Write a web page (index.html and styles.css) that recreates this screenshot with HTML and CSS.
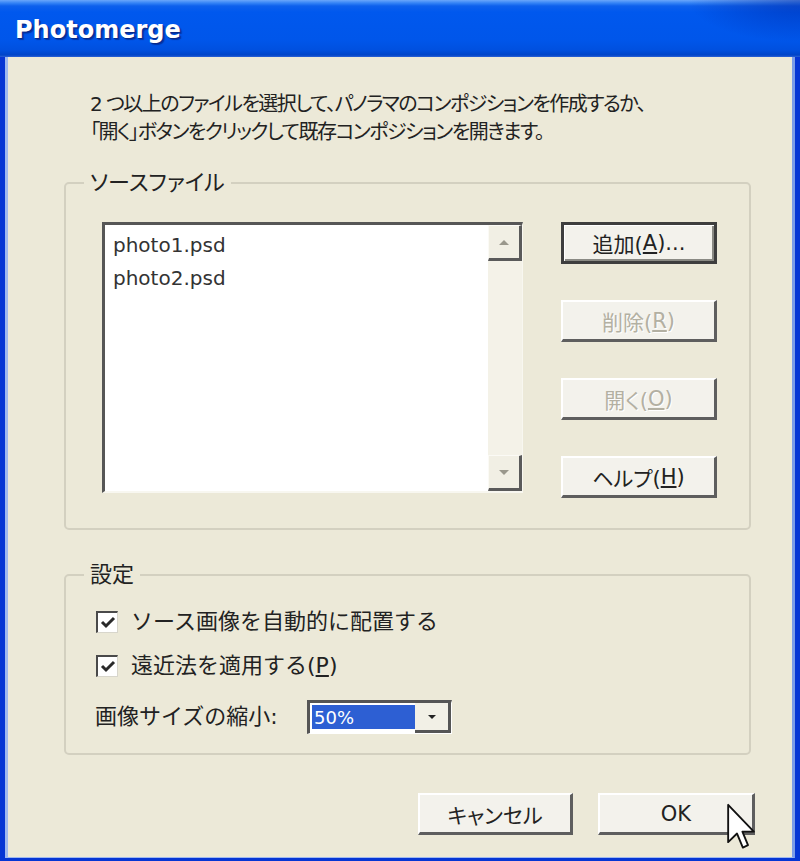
FILE: index.html
```html
<!DOCTYPE html>
<html lang="ja">
<head>
<meta charset="utf-8">
<title>Photomerge</title>
<link rel="stylesheet" href="styles.css">
</head>
<body>
<div class="window">
  <div class="titlebar"><span class="title">Photomerge</span></div>
  <div class="frame">
    <div class="client">
      <p class="desc">2 つ以上のファイルを選択して、パノラマのコンポジションを作成するか、<br>「開く」ボタンをクリックして既存コンポジションを開きます。</p>

      <fieldset class="group source">
        <legend class="legend">ソースファイル</legend>
        <div class="source-body">
          <div class="listbox">
            <div class="items">
              <div class="item">photo1.psd</div>
              <div class="item">photo2.psd</div>
            </div>
            <div class="scrollbar">
              <div class="sb-btn"><svg width="12" height="7" viewBox="0 0 12 7"><path d="M1 6 L6 1 L11 6 Z" fill="#9a988c"/></svg></div>
              <div class="sb-track"></div>
              <div class="sb-btn"><svg width="12" height="7" viewBox="0 0 12 7"><path d="M1 1 L11 1 L6 6 Z" fill="#9a988c"/></svg></div>
            </div>
          </div>
          <div class="btn-col">
            <button class="btn default">追加(<u>A</u>)...</button>
            <button class="btn" disabled>削除(<u>R</u>)</button>
            <button class="btn" disabled>開く(<u>O</u>)</button>
            <button class="btn">ヘルプ(<u>H</u>)</button>
          </div>
        </div>
      </fieldset>

      <fieldset class="group settings">
        <legend class="legend">設定</legend>
        <div class="settings-body">
          <label class="check-row">
            <span class="checkbox"><svg width="16" height="14" viewBox="0 0 16 14"><path d="M2 6 L6 10 L14 2" fill="none" stroke="#2a2a2a" stroke-width="3"/></svg></span>
            <span class="check-label">ソース画像を自動的に配置する</span>
          </label>
          <label class="check-row second">
            <span class="checkbox"><svg width="16" height="14" viewBox="0 0 16 14"><path d="M2 6 L6 10 L14 2" fill="none" stroke="#2a2a2a" stroke-width="3"/></svg></span>
            <span class="check-label">遠近法を適用する(<u>P</u>)</span>
          </label>
          <div class="combo-row">
            <span class="combo-label">画像サイズの縮小:</span>
            <div class="combo">
              <span class="combo-value">50%</span>
              <span class="combo-btn"><svg width="10" height="6" viewBox="0 0 10 6"><path d="M1 1 L9 1 L5 5 Z" fill="#222"/></svg></span>
            </div>
          </div>
        </div>
      </fieldset>

      <div class="footer">
        <button class="btn cancel">キャンセル</button>
        <button class="btn ok">OK</button>
      </div>
    </div>
  </div>
  <svg class="cursor" width="28" height="48" viewBox="0 0 12 20"><path d="M0.5 0.5 L0.5 16.5 L4.3 12.8 L6.8 18.8 L9 17.8 L6.6 12 L11.5 12 Z" fill="#fff" stroke="#111" stroke-width="0.8" stroke-linejoin="round"/></svg>
</div>
</body>
</html>
```

FILE: styles.css
```css
* { box-sizing: border-box; }

html, body {
  margin: 0;
  padding: 0;
}

body {
  width: 800px;
  height: 861px;
  overflow: hidden;
  font-family: "DejaVu Sans", "Noto Sans CJK JP", sans-serif;
  color: #222;
  background: #0b3fd6;
}

.window {
  position: relative;
  width: 800px;
  height: 861px;
  display: flex;
  flex-direction: column;
}

.titlebar {
  height: 57px;
  flex: none;
  display: flex;
  align-items: center;
  padding-left: 15px;
  background:
    radial-gradient(ellipse 160px 60px at 100% 0%, rgba(0, 30, 150, 0.45), rgba(0, 30, 150, 0) 70%),
    linear-gradient(to bottom, #6aa6fa 0px, #3584f6 3px, #0d60ec 6px, #0058ee 12px, #0056ea 40px, #0050df 50px, #0044c8 55px, #2b62d6 57px);
}

.title {
  font-family: "DejaVu Sans", sans-serif;
  font-weight: bold;
  font-size: 24px;
  color: #fff;
  text-shadow: 1px 1px 0 #0a2a8a, 2px 2px 1px rgba(0, 20, 100, 0.5);
  margin-top: 2px;
}

.frame {
  flex: 1;
  display: flex;
  padding: 0 5px 3px 5px;
  background: #0636d4;
}

.client {
  flex: 1;
  display: flex;
  flex-direction: column;
  background: #ece9d8;
  border-left: 3px solid #9fb9ef;
  border-right: 3px solid #7c9de8;
  border-bottom: 1px solid #9fb9ef;
  padding: 33px 41px 0 56px;
}

.desc {
  margin: 0 0 0 26px;
  font-size: 20px;
  line-height: 28px;
  white-space: nowrap;
  font-feature-settings: "palt";
  letter-spacing: -1.5px;
  color: #222;
}

.group {
  margin: 0;
  padding: 0;
  border: 2px solid #d3d0c0;
  border-radius: 5px;
  min-width: 0;
}

.legend {
  margin-left: 18px;
  padding: 0 6px;
  font-size: 22px;
  line-height: 28px;
  font-feature-settings: "palt";
  color: #222;
}

.source {
  margin-top: 23px;
}

.source-body {
  display: flex;
  align-items: flex-start;
  gap: 38px;
  padding: 25px 32px 30px 36px;
}

.listbox {
  width: 421px;
  height: 271px;
  display: flex;
  background: #fff;
  border-top: 3px solid #565656;
  border-left: 3px solid #565656;
  border-right: 1px solid #f8f7f0;
  border-bottom: 2px solid #f8f7f0;
}

.items {
  flex: 1;
  padding: 4px 8px;
}

.item {
  font-family: "DejaVu Sans", sans-serif;
  font-size: 20px;
  line-height: 33px;
  color: #333;
}

.scrollbar {
  width: 34px;
  display: flex;
  flex-direction: column;
  background: #f4f2e8;
}

.sb-btn {
  height: 36px;
  display: flex;
  align-items: center;
  justify-content: center;
  background: #f1efe4;
  border-right: 3px solid #5a5a5a;
  border-bottom: 3px solid #5a5a5a;
  border-top: 1px solid #fbfaf5;
  border-left: 1px solid #fbfaf5;
}

.sb-track {
  flex: 1;
}

.btn-col {
  display: flex;
  flex-direction: column;
  gap: 36px;
  width: 156px;
}

.btn {
  height: 42px;
  padding: 0;
  display: flex;
  align-items: center;
  justify-content: center;
  background: #f3f2ec;
  border-top: 2px solid #ffffff;
  border-left: 2px solid #ffffff;
  border-right: 3px solid #5e5e5e;
  border-bottom: 3px solid #5e5e5e;
  font-family: "DejaVu Sans", "Noto Sans CJK JP", sans-serif;
  font-size: 21px;
  font-feature-settings: "palt";
  color: #222;
}

.btn.default {
  border: 3px solid #3e3e3e;
  box-shadow: inset 1px 1px 0 #ffffff, inset -2px -2px 0 #8a8a84;
}

.btn:disabled {
  color: #b3b0a2;
  text-shadow: 1px 1px 0 #ffffff;
}

.settings {
  margin-top: 31px;
}

.settings-body {
  display: flex;
  flex-direction: column;
  padding: 19px 30px 19px 30px;
}

.check-row {
  display: flex;
  align-items: center;
  height: 28px;
  gap: 13px;
}

.check-row.second {
  margin-top: 16px;
}

.checkbox {
  width: 22px;
  height: 22px;
  flex: none;
  display: flex;
  align-items: center;
  justify-content: center;
  background: #fff;
  border-top: 2px solid #4a4a4a;
  border-left: 2px solid #4a4a4a;
  border-right: 1px solid #d8d6cc;
  border-bottom: 1px solid #d8d6cc;
}

.check-label,
.combo-label {
  font-size: 22px;
  line-height: 28px;
  white-space: nowrap;
  color: #222;
}

.combo-row {
  display: flex;
  align-items: center;
  height: 34px;
  margin-top: 20px;
}

.combo-label {
  width: 212px;
  margin-left: -1px;
}

.combo {
  width: 145px;
  height: 34px;
  display: flex;
  background: #fff;
  border-top: 3px solid #555;
  border-left: 3px solid #555;
  border-right: 1px solid #fff;
  border-bottom: 1px solid #fff;
}

.combo-value {
  flex: 1;
  margin: 2px 0 4px 2px;
  padding-left: 2px;
  display: flex;
  align-items: center;
  background: #2d5fd3;
  color: #fff;
  font-family: "DejaVu Sans", sans-serif;
  font-size: 18px;
}

.combo-btn {
  width: 36px;
  display: flex;
  align-items: center;
  justify-content: center;
  background: #f2f0e6;
  border-right: 3px solid #555;
  border-bottom: 3px solid #555;
}

.footer {
  display: flex;
  justify-content: flex-end;
  gap: 25px;
  margin-top: 38px;
  margin-right: -4px;
}

.btn.cancel {
  width: 155px;
}

.btn.ok {
  width: 157px;
}

.cursor {
  position: absolute;
  left: 727px;
  top: 803px;
}
```
